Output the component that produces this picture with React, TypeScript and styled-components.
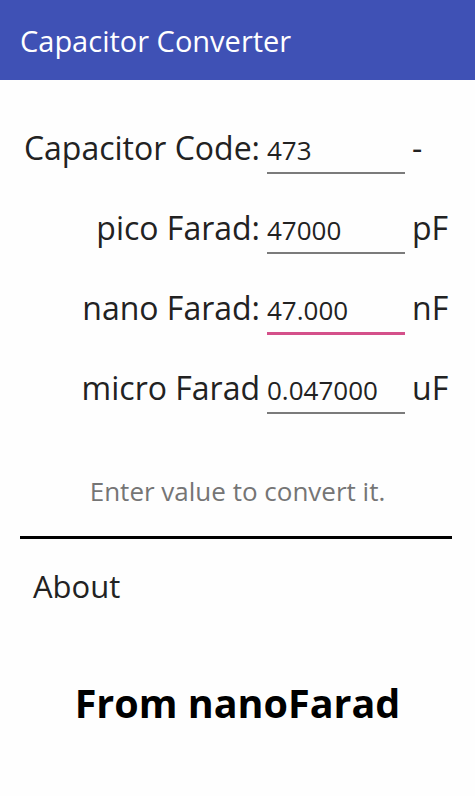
import React from 'react'
import styled, { createGlobalStyle } from 'styled-components'

const GlobalStyle = createGlobalStyle`
  html, body {
    margin: 0;
    padding: 0;
    background: #fefefe;
    font-family: 'Open Sans', 'DejaVu Sans', sans-serif;
  }
`

const Screen = styled.div`
  width: 475px;
  min-height: 796px;
  display: flex;
  flex-direction: column;
  background: #fefefe;
`

const AppBar = styled.div`
  height: 80px;
  background-color: #3f51b5;
  display: flex;
  align-items: center;
  padding-left: 20px;
  color: #fff;
  font-size: 29px;
`

const Form = styled.div`
  display: flex;
  flex-direction: column;
  padding-top: 20px;
`

const Row = styled.div`
  height: 80px;
  display: grid;
  grid-template-columns: 260px 138px auto;
  column-gap: 7px;
  align-items: end;
`

const Label = styled.div`
  text-align: right;
  font-size: 32px;
  color: #222;
  line-height: 40px;
  padding-bottom: 12px;
  white-space: nowrap;
`

// focused field gets the thicker accent underline
const Field = styled.input<{ focused?: boolean }>`
  width: 100%;
  box-sizing: border-box;
  border: none;
  outline: none;
  background: transparent;
  font-family: inherit;
  font-size: 26px;
  color: #222;
  padding: 0 0 7px 0;
  line-height: 30px;
  border-bottom: ${({ focused }) => (focused ? '3px solid #d4508a' : '2px solid #7b7b7b')};
  margin-bottom: ${({ focused }) => (focused ? '5px' : '6px')};
`

const Unit = styled.div`
  font-size: 32px;
  color: #222;
  line-height: 40px;
  padding-bottom: 12px;
`

const Hint = styled.div`
  margin-top: 53px;
  text-align: center;
  font-size: 26px;
  color: #757575;
`

const Divider = styled.div`
  margin: 27px 23px 0 20px;
  height: 3px;
  background: #000;
`

const AboutLink = styled.div`
  margin: 26px 0 0 33px;
  font-size: 31px;
  color: #222;
`

const Source = styled.div`
  margin-top: 69px;
  text-align: center;
  font-size: 39.5px;
  font-weight: 700;
  color: #000;
`

const rows = [
  { label: 'Capacitor Code:', value: '473', unit: '-' },
  { label: 'pico Farad:', value: '47000', unit: 'pF' },
  { label: 'nano Farad:', value: '47.000', unit: 'nF', focused: true },
  { label: 'micro Farad', value: '0.047000', unit: 'uF' },
]

export default function App() {
  return (
    <Screen>
      <GlobalStyle />
      <AppBar>Capacitor Converter</AppBar>
      <Form>
        {rows.map(r => (
          <Row key={r.label}>
            <Label>{r.label}</Label>
            <Field focused={r.focused} defaultValue={r.value} />
            <Unit>{r.unit}</Unit>
          </Row>
        ))}
      </Form>
      <Hint>Enter value to convert it.</Hint>
      <Divider />
      <AboutLink>About</AboutLink>
      <Source>From nanoFarad</Source>
    </Screen>
  )
}
